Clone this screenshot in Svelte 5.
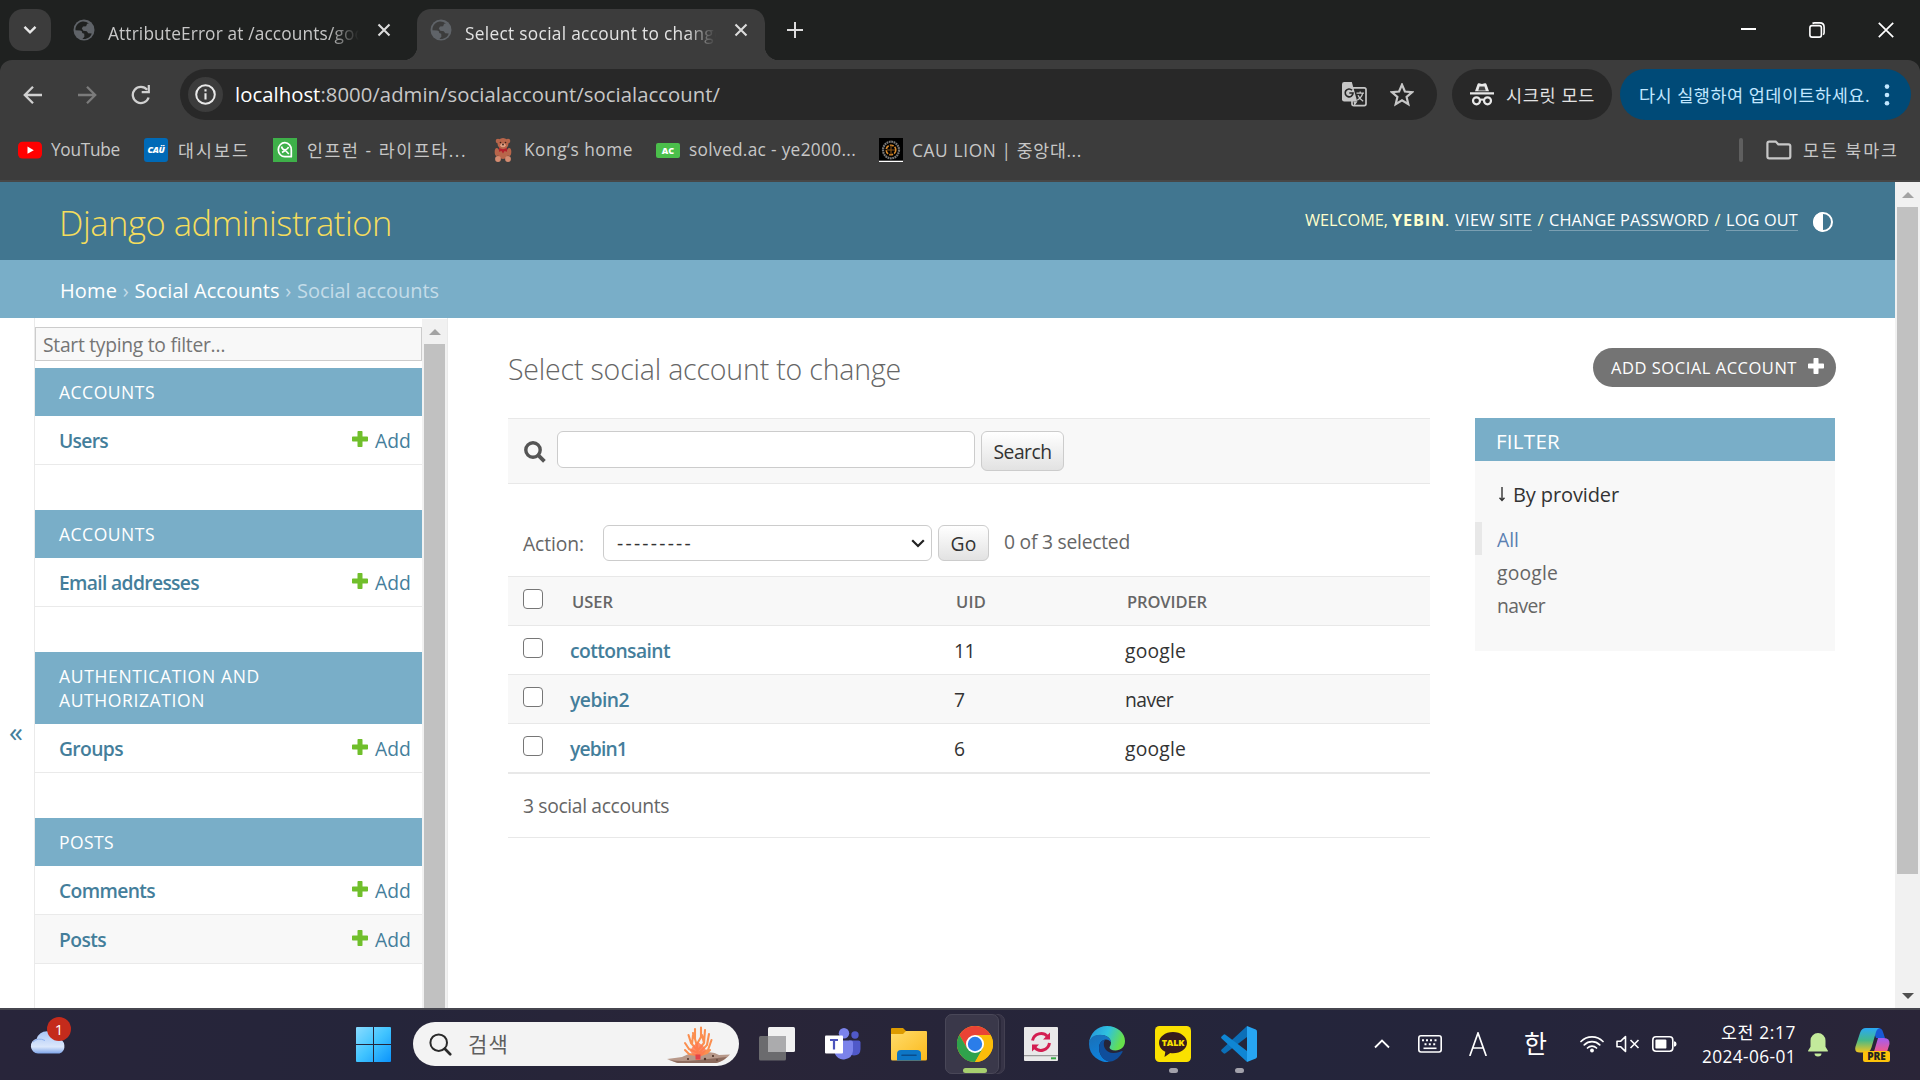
<script>
  // Spreads a label's letters so that it fills the given width in pixels.
  function fit(node, width) {
    const count = [...node.textContent].length;
    const natural = node.getBoundingClientRect().width;
    node.style.letterSpacing = `${(width - natural) / count}px`;
  }

  const modules = [
    { lines: [['ACCOUNTS', 96]], rows: [['Users', 49]] },
    { lines: [['ACCOUNTS', 96]], rows: [['Email addresses', 140]] },
    { lines: [['AUTHENTICATION AND', 201], ['AUTHORIZATION', 146]], rows: [['Groups', 64]] },
    { lines: [['POSTS', 55]], rows: [['Comments', 96], ['Posts', 47]] }
  ];

  const accounts = [
    { user: 'cottonsaint', w: 100, uid: '11', uw: 21, provider: 'google', pw: 61 },
    { user: 'yebin2', w: 59, uid: '7', uw: 11, provider: 'naver', pw: 48 },
    { user: 'yebin1', w: 57, uid: '6', uw: 11, provider: 'google', pw: 61 }
  ];
</script>

{#snippet globe()}
  <svg class="globe" width="22" height="22" viewBox="0 0 22 22">
    <circle cx="11" cy="11" r="10.5" fill="#5f6368" />
    <path d="M8.500 2.800c-4 1.200-6.300 4.700-6 8.400l4.500.3c1.500.2 2.300 1 2.200 2.500l2 .7.2 3-2 2.200c4.500.7 8.300-1.800 9.300-5.400l-3.500-.2-1.400-2.100-3.500-.5-1.500-2.200 1.200-1.900 3.100-.3 1-2.500 1.800-.3C13.700 2.800 11 2.100 8.500 2.800z" fill="currentColor" />
  </svg>
{/snippet}

{#snippet plus(color)}
  <svg class="plus" width="16" height="16" viewBox="0 0 16 16">
    <path d="M6.300 0h3.400q.8 0 .8.8v4.700h4.700q.8 0 .8.8v3.400q0 .8-.8.8h-4.700v4.700q0 .8-.8.8H6.300q-.8 0-.8-.8v-4.700H.8q-.8 0-.8-.8V6.300q0-.8.8-.8h4.700V.8q0-.8.8-.8z" fill={color} />
  </svg>
{/snippet}

{#snippet tabClose()}
  <svg width="14" height="14" viewBox="0 0 14 14"><path d="M1.500 1.500l11 11M12.500 1.500l-11 11" stroke="#dcdcdc" stroke-width="2.100" /></svg>
{/snippet}

<div class="screen">
  <div class="tabs">
    <div class="tab-menu">
      <svg width="14" height="10" viewBox="0 0 14 10"><path d="M1.500 1.800L7 7.300l5.500-5.500" fill="none" stroke="#e8e8e8" stroke-width="2.400" /></svg>
    </div>
    <div class="tab idle">
      {@render globe()}
      <div class="tab-title"><span class="t" use:fit={257}>AttributeError at /accounts/goo</span></div>
      {@render tabClose()}
    </div>
    <div class="tab active">
      {@render globe()}
      <div class="tab-title"><span class="t" use:fit={259}>Select social account to change</span></div>
      {@render tabClose()}
    </div>
    <svg class="new-tab" width="16" height="16" viewBox="0 0 16 16"><path d="M8 0v16M0 8h16" stroke="#dcdcdc" stroke-width="2" /></svg>
    <div class="window">
      <svg width="16" height="16" viewBox="0 0 16 16"><path d="M1 7h15" stroke="#fff" stroke-width="2" /></svg>
      <svg width="16" height="16" viewBox="0 0 16 16" fill="none" stroke="#fff" stroke-width="1.600"><rect x=".9" y="3.600" width="11.500" height="11.500" rx="2.200" /><path d="M3.500 1.500Q4.300.9 5.500.9h5.300q4.300 0 4.300 4.300v5.300q0 1.300-.9 2.200" /></svg>
      <svg width="16" height="16" viewBox="0 0 16 16"><path d="M.8.8l14.400 14.400M15.200.8L.8 15.200" stroke="#fff" stroke-width="1.700" /></svg>
    </div>
  </div>

  <div class="chrome">
    <div class="toolbar">
      <svg class="nav" width="20" height="20" viewBox="0 0 20 20" fill="none" stroke="#d0d0d0" stroke-width="2.300"><path d="M19 10H2.500M10 1.800L1.800 10l8.200 8.200" /></svg>
      <svg class="nav" width="20" height="20" viewBox="0 0 20 20" fill="none" stroke="#7b7b7b" stroke-width="2.300"><path d="M1 10h16.500M10 1.800l8.200 8.200-8.200 8.200" /></svg>
      <svg class="nav" width="20" height="20" viewBox="0 0 20 20"><path d="M17.600 12.500A8.100 8.100 0 1 1 16.200 4.800" fill="none" stroke="#d0d0d0" stroke-width="2.300" /><path d="M18.900 0v8.200h-8.200V6h6V0z" fill="#d0d0d0" /></svg>
      <div class="omnibox">
        <div class="info">
          <svg width="21" height="21" viewBox="0 0 21 21"><circle cx="10.500" cy="10.500" r="9.300" fill="none" stroke="#e8e8e8" stroke-width="2" /><path d="M10.500 9.200v6.300M10.500 5.300v2.300" stroke="#e8e8e8" stroke-width="2.100" /></svg>
        </div>
        <span class="t url" use:fit={485}><b>localhost</b>:8000/admin/socialaccount/socialaccount/</span>
        <svg class="translate" width="25" height="25" viewBox="0 0 25 25">
          <rect x="10" y="5.800" width="14" height="17.800" rx="1.800" fill="none" stroke="#c7c7c7" stroke-width="1.700" />
          <path d="M2.200 0h7.600l5.400 19.500H2.200Q0 19.500 0 17.300V2.200Q0 0 2.200 0z" fill="#c7c7c7" />
          <path d="M11.500 19.500h4L12.300 24z" fill="#c7c7c7" />
          <path d="M10 8.300A3.900 3.900 0 1 0 11 11H7.300" fill="none" stroke="#282828" stroke-width="1.700" />
          <path d="M14.500 11.200h7.500M18.200 9.500v1.700M20.700 11.200q-1 4.500-5.500 7M16 13.200q1.500 3.800 5.200 6" fill="none" stroke="#c7c7c7" stroke-width="1.300" />
        </svg>
        <svg class="star" width="24" height="24" viewBox="0 0 24 24"><path d="M12 1.600l2.900 6.900 7.300.6-5.600 4.800 1.700 7.200-6.300-3.900-6.300 3.900 1.700-7.200L1.800 9.100l7.300-.6z" fill="none" stroke="#c7c7c7" stroke-width="2.200" /></svg>
      </div>
      <div class="incognito">
        <svg width="24" height="23" viewBox="0 0 24 23"><path d="M0 9.200h24v2.200H0zM5 8.200L7.500 1.200Q7.900 0 9.100.3l2.900.8 2.900-.8q1.200-.3 1.600.9L19 8.200z" fill="#e8e8e8" /><path d="M9.500 3.500h5l1.200 4H8.300z" fill="#282828" opacity=".85" /><circle cx="6.500" cy="17.800" r="3.500" fill="none" stroke="#e8e8e8" stroke-width="2.200" /><circle cx="17.500" cy="17.800" r="3.500" fill="none" stroke="#e8e8e8" stroke-width="2.200" /><path d="M9.500 17.200q2.500-1.600 5 0" fill="none" stroke="#e8e8e8" stroke-width="2" /></svg>
        <span class="t" use:fit={89}>시크릿 모드</span>
      </div>
      <div class="update">
        <span class="t" use:fit={231}>다시 실행하여 업데이트하세요.</span>
        <svg width="6" height="22" viewBox="0 0 6 22" fill="#c2e7ff"><circle cx="3" cy="2.600" r="2.300" /><circle cx="3" cy="11" r="2.300" /><circle cx="3" cy="19.300" r="2.300" /></svg>
      </div>
    </div>
    <div class="bookmarks">
      <svg class="i1" width="24" height="24" viewBox="0 0 24 24"><rect x="0" y="3.800" width="24" height="16.800" rx="4.500" fill="#f00" /><path d="M9.500 8.600l6.300 3.600-6.300 3.600z" fill="#fff" /></svg>
      <span class="t b1" use:fit={69}>YouTube</span>
      <div class="cau"><i>CAÜ</i></div>
      <span class="t b2" use:fit={72}>대시보드</span>
      <svg class="i3" width="24" height="24" viewBox="0 0 24 24"><path d="M0 0h24v24H0z" fill="#3eb049" /><path d="M18.300 18.700H12A6.500 7 0 1 1 18.300 12z" fill="none" stroke="#fff" stroke-width="1.700" stroke-linejoin="round" /><path d="M8.500 8.500q.5 3 3.500 3.500 3-1 3.500-3M12 12l3.800 4M9 14.500l3-2" fill="none" stroke="#fff" stroke-width="1.600" /></svg>
      <span class="t b3" use:fit={160}>인프런 - 라이프타...</span>
      <svg class="i4" width="24" height="24" viewBox="0 0 24 24"><g fill="#b8654a"><circle cx="7" cy="3" r="2.300" /><circle cx="17" cy="3" r="2.300" /><circle cx="12" cy="5.500" r="5.500" /><ellipse cx="12" cy="15" rx="5.500" ry="6" /><ellipse cx="5.800" cy="14" rx="2.100" ry="4" /><ellipse cx="18.200" cy="14" rx="2.100" ry="4" /></g><circle cx="7" cy="21" r="2.900" fill="#d58b70" /><circle cx="17" cy="21" r="2.900" fill="#d58b70" /><ellipse cx="12" cy="7.300" rx="2.700" ry="2" fill="#e0a184" /><circle cx="9.500" cy="4.500" r=".8" fill="#3b1f1a" /><circle cx="14.500" cy="4.500" r=".8" fill="#3b1f1a" /><circle cx="12" cy="6.500" r=".9" fill="#3b1f1a" /><path d="M8 10l4 1.300 4-1.300v3.700l-2.500-.8L12 15.500l-1.500-2.600-2.500.8z" fill="#b3202c" /></svg>
      <span class="t b4" use:fit={109}>Kong‘s home</span>
      <div class="ac">AC</div>
      <span class="t b5" use:fit={167}>solved.ac - ye2000...</span>
      <svg class="i6" width="24" height="24" viewBox="0 0 24 24"><path d="M0 0h24v22.500H0z" fill="#000" /><path d="M0 22.800h24V24H0z" fill="#fff" /><ellipse cx="12" cy="12" rx="8" ry="8.300" fill="none" stroke="#777" stroke-width="2.200" stroke-dasharray="1.800 .6" /><circle cx="12" cy="12" r="4.800" fill="none" stroke="#d98a2b" stroke-width="1.600" stroke-dasharray="4 1.200" /><path d="M12 7v10M8 12h8" stroke="#8f5716" /></svg>
      <span class="t b6" use:fit={170}>CAU LION | 중앙대...</span>
      <div class="divider"></div>
      <svg class="folder" width="26" height="20" viewBox="0 0 26 20"><path d="M3.200 1.600h6.500l2.600 2.700h10.200q1.800 0 1.800 1.800v10.500q0 1.800-1.800 1.800H3.200q-1.800 0-1.800-1.800V3.400q0-1.800 1.800-1.800z" fill="none" stroke="#c7c7c7" stroke-width="2.200" /></svg>
      <span class="t" use:fit={96}>모든 북마크</span>
    </div>
  </div>

  <div class="viewport">
    <div class="page">
      <header>
        <span class="t brand" use:fit={333}>Django administration</span>
        <div class="tools">
          <span class="t" use:fit={87}>WELCOME,&nbsp;</span><b class="t" use:fit={53}>YEBIN</b><span class="t dot">.</span>
          <span class="t link" use:fit={77}>VIEW SITE</span><span class="slash">/</span>
          <span class="t link" use:fit={160}>CHANGE PASSWORD</span><span class="slash">/</span>
          <span class="t link" use:fit={72}>LOG OUT</span>
          <svg width="20" height="20" viewBox="0 0 20 20"><circle cx="10" cy="10" r="9" fill="none" stroke="#fff" stroke-width="2" /><path d="M10 0a10 10 0 0 0 0 20z" fill="#fff" /></svg>
        </div>
      </header>
      <div class="crumbs">
        <span class="t on" use:fit={57}>Home</span><span class="sep">›</span>
        <span class="t on" use:fit={145}>Social Accounts</span><span class="sep">›</span>
        <span class="t" use:fit={142}>Social accounts</span>
      </div>

      <div class="body">
        <div class="toggle">«</div>
        <nav>
          <div class="nav-list">
            <input class="filter-input" placeholder="Start typing to filter…" />
            {#each modules as m}
              <section>
                <h2>{#each m.lines as [text, w]}<span class="t" use:fit={w}>{text}</span>{/each}</h2>
                {#each m.rows as [name, w]}
                  <div class="model">
                    <b class="t" use:fit={w}>{name}</b>
                    {@render plus('#70bf2b')}
                    <span class="t add" use:fit={36}>Add</span>
                  </div>
                {/each}
              </section>
            {/each}
          </div>
          <div class="scroll side">
            <svg class="arrow" width="12" height="6" viewBox="0 0 12 6"><path d="M0 6L6 0l6 6z" fill="#a3a3a3" /></svg>
            <div class="thumb"></div>
          </div>
        </nav>

        <main>
          <div class="title">
            <h1 class="t" use:fit={393}>Select social account to change</h1>
            <div class="add-btn"><span class="t" use:fit={186}>ADD SOCIAL ACCOUNT</span>{@render plus('#fff')}</div>
          </div>
          <div class="cols">
            <div class="list">
              <div class="search">
                <svg width="22" height="22" viewBox="0 0 22 22" fill="none" stroke="#555"><circle cx="9" cy="9" r="7.200" stroke-width="3.400" /><path d="M14.200 14.200l6.200 6.200" stroke-width="3.800" /></svg>
                <input class="query" />
                <button class="search-btn"><span class="t" use:fit={58}>Search</span></button>
              </div>
              <div class="actions">
                <div class="label"><span class="t" use:fit={61}>Action:</span></div>
                <div class="select"><span class="t" use:fit={76}>---------</span><svg width="14" height="9" viewBox="0 0 14 9"><path d="M1.200 1.200L7 7l5.800-5.800" fill="none" stroke="#222" stroke-width="2.200" /></svg></div>
                <button class="go"><span class="t" use:fit={26}>Go</span></button>
                <span class="t count" use:fit={126}>0 of 3 selected</span>
              </div>
              <div class="row head">
                <input type="checkbox" />
                <span class="t" use:fit={41}>USER</span><span class="t" use:fit={30}>UID</span><span class="t" use:fit={80}>PROVIDER</span>
              </div>
              {#each accounts as a}
                <div class="row">
                  <input type="checkbox" />
                  <b class="t" use:fit={a.w}>{a.user}</b><span class="t" use:fit={a.uw}>{a.uid}</span><span class="t" use:fit={a.pw}>{a.provider}</span>
                </div>
              {/each}
              <div class="paginator"><span class="t" use:fit={146}>3 social accounts</span></div>
            </div>

            <aside>
              <h2><span class="t" use:fit={64}>FILTER</span></h2>
              <h3>
                <svg width="8" height="15" viewBox="0 0 8 15"><path d="M4 0v13M1.500 10.800l2.500 2.700 2.500-2.700" fill="none" stroke="#333" stroke-width="1.400" /></svg>
                <span class="t" use:fit={106}>By provider</span>
              </h3>
              <div class="opt chosen"><span class="t" use:fit={22}>All</span></div>
              <div class="opt"><span class="t" use:fit={61}>google</span></div>
              <div class="opt"><span class="t" use:fit={48}>naver</span></div>
            </aside>
          </div>
        </main>
      </div>
    </div>
    <div class="scroll outer">
      <svg class="arrow" width="12" height="6" viewBox="0 0 12 6"><path d="M0 6L6 0l6 6z" fill="#a3a3a3" /></svg>
      <div class="thumb"></div>
      <svg class="down" width="12" height="6" viewBox="0 0 12 6"><path d="M0 0l6 6 6-6z" fill="#505050" /></svg>
    </div>
  </div>

  <footer>
    <div class="weather">
      <svg width="38" height="26" viewBox="0 0 38 26">
        <defs><linearGradient id="cl" x1="0" y1="0" x2="0" y2="1"><stop offset="0" stop-color="#a9c6f7" /><stop offset=".7" stop-color="#dbe7fb" /><stop offset="1" stop-color="#7fa6ea" /></linearGradient></defs>
        <path d="M8 24.500a7.500 7.500 0 0 1-1.300-14.800A11 11 0 0 1 27.500 9.500 7.800 7.800 0 0 1 29.500 24.500z" fill="url(#cl)" /><path d="M3 13q5-5 12-1.500" fill="none" stroke="#8fb1ee" />
      </svg>
      <span class="badge">1</span>
    </div>
    <svg class="start" width="36" height="36" viewBox="0 0 36 36">
      <defs><linearGradient id="win" x1="0" y1="0" x2="1" y2="1"><stop offset="0" stop-color="#8adcff" /><stop offset=".5" stop-color="#41c4ff" /><stop offset="1" stop-color="#0b93fb" /></linearGradient></defs>
      <path d="M1 0h16v17H0V1q0-1 1-1zM18 0h16q1 0 1 1v16H18zM0 18h17v17H1q-1 0-1-1zM18 18h17v16q0 1-1 1H18z" fill="url(#win)" />
    </svg>
    <div class="find">
      <svg width="23" height="23" viewBox="0 0 23 23" fill="none" stroke="#2a2a2a"><circle cx="9.700" cy="9.700" r="8.300" stroke-width="2" /><path d="M15.800 15.800l5.400 5.400" stroke-width="2.700" stroke-linecap="round" /></svg>
      <span class="t" use:fit={41}>검색</span>
      <svg class="coral" width="64" height="40" viewBox="0 0 64 40">
        <path d="M0 34q8-1 15-2 8-5 18-2.500Q44 25 52 30l11-.5q-5 6-13 8.500H10z" fill="#b8998a" />
        <path d="M2 35q12 2 30 0t28-3q-4 4-11 6H11z" fill="#6f4c40" opacity=".6" />
        <g fill="#4d3228"><circle cx="21" cy="34" r="1" /><circle cx="38" cy="34" r="1.200" /><circle cx="46" cy="31" r="1.100" /><circle cx="50" cy="35" r=".8" /></g>
        <g fill="none" stroke="#fb8f50" stroke-width="2.100" stroke-linecap="round" stroke-linejoin="round"><path d="M31 33l-1-12-2-7V4M30 19l4-7V2.500M31 26l-7-8-2.500-8M31 28l-9-4-4-6M30 30l-8-1-4-4M32 24l5-6 1-13M33 27l7-7 2-11M33 29l8-4 3.500-10M34 30l6-2 3-3M25 19l1-9M28 14l-2-6M37 18l-2-8" /></g>
        <path d="M23 26q3-6 8-9 5 3 8 8-3 6-6 6.500V35h-4v-3.500q-4-2-6-5.500z" fill="#ff7a50" opacity=".85" />
        <path d="M28.500 29.500h5v5h-5z" fill="#e3434a" />
      </svg>
    </div>
    <svg class="taskview" width="36" height="34" viewBox="0 0 36 34"><rect x="9" y="0" width="27" height="25" rx="1.500" fill="#f1f1f1" /><rect x="0" y="9" width="27" height="24.500" rx="1.500" fill="#6b6b6e" /><path d="M9 9h18v16H9z" fill="#ababad" /></svg>
    <svg class="teams" width="36" height="34" viewBox="0 0 36 34"><circle cx="30" cy="7" r="3.700" fill="#5059c9" /><circle cx="19" cy="5.200" r="5.200" fill="#7b83eb" /><path d="M24 12.500h9.500q2 0 2 2V21q0 6.500-6.500 6.500-3 0-5-2z" fill="#5059c9" /><path d="M10 12.500h16q2 0 2 2V23a9.500 9.500 0 0 1-18 3z" fill="#7b83eb" /><rect x="0" y="7.500" width="18" height="18" rx="1" fill="#fff" /><path d="M5 12h8M9 12v9.500" stroke="#4b53bc" stroke-width="2.200" /></svg>
    <svg class="files" width="36" height="34" viewBox="0 0 36 34"><defs><linearGradient id="fo" x1="0" y1="0" x2="1" y2="1"><stop offset="0" stop-color="#ffdc6b" /><stop offset="1" stop-color="#fbb91b" /></linearGradient></defs><path d="M1 1h11l3 3v8H0V2q0-1 1-1z" fill="#dd9b00" /><path d="M0 7h12l3-3h20q1 0 1 1v27q0 1.500-1.500 1.500h-33Q0 33.500 0 32z" fill="url(#fo)" /><path d="M6 33.500V27q0-4 4-4h16q4 0 4 4v6.500z" fill="#0d76c6" /><path d="M11 28.200h14" stroke="#0a4d8c" stroke-width="1.600" stroke-linecap="round" /></svg>
    <div class="stack">
      <div class="slot">
        <svg width="36" height="36" viewBox="0 0 36 36"><circle cx="18" cy="18" r="18" fill="#fbbc0a" /><path d="M2.400 9A18 18 0 0 1 33.600 9H18l-7.800 13.500z" fill="#ea4335" /><path d="M2.400 9A18 18 0 0 0 18 36l7.800-13.500H10.200z" fill="#2fa24c" /><path d="M18 9h15.600A18 18 0 0 1 18 36l7.800-13.500z" fill="#fbbc0a" /><circle cx="18" cy="18" r="9" fill="#fff" /><circle cx="18" cy="18" r="7.200" fill="#2b7de9" /></svg>
        <span class="mark wide"></span>
      </div>
    </div>
    <svg class="sync" width="34" height="34" viewBox="0 0 34 34"><rect width="34" height="34" rx="1" fill="#e9e9e9" /><path d="M0 28h34v1.300H0z" fill="#9a9a9a" /><path d="M27 30.300h5v2h-5z" fill="#38a845" /><g fill="none" stroke="#d31f51" stroke-width="3"><path d="M8.500 13.500a8.700 8.700 0 0 1 15-4" /><path d="M25.500 16a8.700 8.700 0 0 1-15 4.500" /></g><path d="M26 5.500v7h-7zM8 24.500v-7h7z" fill="#d31f51" /></svg>
    <svg class="edge" width="36" height="36" viewBox="0 0 36 36"><defs><linearGradient id="e1" x1="0" y1="0" x2="1" y2=".3"><stop offset="0" stop-color="#2390dd" /><stop offset=".55" stop-color="#2fc2df" /><stop offset="1" stop-color="#66e04c" /></linearGradient><linearGradient id="e2" x1="0" y1="0" x2=".4" y2="1"><stop offset="0" stop-color="#1b6fb5" /><stop offset="1" stop-color="#0d82dd" /></linearGradient></defs><path d="M0 17C1 7 8.500 0 18 0c10.500 0 18 7 18 15 0 6-4.500 9.500-9.500 9.500-4 0-6-1.500-6-3 0-1.200 1.500-2 1.500-5C22 12 17 9 12 9 6 9 1.500 12.500 0 17z" fill="url(#e1)" /><path d="M0 18C0 12 5 8.800 11 8.800c6 0 11 3.200 11 7.700-1-2-3-3-5-3-4 0-7 4-7 8.500C10 29 15 35 21.500 35.600A18 18 0 0 1 0 18z" fill="url(#e2)" /><path d="M10 22c0-4.500 2.500-8 6-8.300-3 4.500-.5 13.300 8.500 13.300 4 0 7-1.500 8.500-2 .6 0 .8.500.5 1-2.500 5-7 9-12 9.600C15 35.500 10 29 10 22z" fill="#0f4e9c" /></svg>
    <div class="kakao">
      <svg width="36" height="36" viewBox="0 0 36 36"><rect width="36" height="36" rx="4.500" fill="#fae100" /><path d="M18 6C10.300 6 4 10.800 4 16.700c0 4 2.700 7.300 6.300 9.100L9.500 31l5.700-4q1.400.2 2.800.2c7.700 0 14-4.600 14-10.500S25.700 6 18 6z" fill="#371c1d" /></svg>
      <span>TALK</span><i class="mark"></i>
    </div>
    <div class="code">
      <svg width="36" height="36" viewBox="0 0 36 36"><path d="M26 0v11L4.500 27.300q-1 .7-2 0L.6 25.500q-1-1 0-2L25 1z" fill="#0b6fb8" /><path d="M26 36V25L4.500 8.700q-1-.7-2 0L.6 10.500q-1 1 0 2L25 35z" fill="#0f86d4" /><path d="M26 0l8.800 3.600q1.200.6 1.200 2v24.800q0 1.400-1.200 2L26 36z" fill="#27a5f2" /></svg>
      <i class="mark"></i>
    </div>

    <svg class="up" width="16" height="10" viewBox="0 0 16 10"><path d="M1 8.500l7-7 7 7" fill="none" stroke="#fff" stroke-width="1.800" /></svg>
    <svg class="kbd" width="24" height="18" viewBox="0 0 24 18"><rect x=".8" y=".8" width="22.400" height="16.200" rx="2.200" fill="none" stroke="#fff" stroke-width="1.600" /><path d="M4 5.300h2M8 5.300h2M12 5.300h2M16.500 5.300h2M6.500 9.300h2M10.800 9.300h2M15.200 9.300h2" stroke="#fff" stroke-width="1.900" /><path d="M5.500 13.300h13" stroke="#fff" stroke-width="1.600" /></svg>
    <svg class="latin" width="18" height="24" viewBox="0 0 18 24"><path d="M.8 24L9 1l8.200 23M3.600 16h10.800" fill="none" stroke="#fff" stroke-width="1.700" /></svg>
    <span class="hangul">한</span>
    <svg class="wifi" width="24" height="18" viewBox="0 0 24 18" fill="none" stroke="#fff" stroke-width="1.700" stroke-linecap="round"><path d="M1 6.500a15.500 15.500 0 0 1 22 0M4.300 9.900a10.900 10.900 0 0 1 15.400 0M7.500 13a6.400 6.400 0 0 1 9 0" /><circle cx="12" cy="15.500" r="1.900" fill="#fff" stroke="none" /></svg>
    <svg class="mute" width="24" height="18" viewBox="0 0 24 18" fill="none" stroke="#fff" stroke-width="1.600"><path d="M1 6.300v5.400h3.500L9.500 16.500v-15L4.500 6.300z" stroke-linejoin="round" /><path d="M14.500 5l8 8M22.500 5l-8 8" /></svg>
    <svg class="battery" width="25" height="16" viewBox="0 0 25 16"><rect x=".8" y=".8" width="20" height="14.400" rx="3.200" fill="none" stroke="#fff" stroke-width="1.600" /><rect x="3.400" y="3.400" width="11" height="9.200" rx="1.200" fill="#fff" /><path d="M22 5.200q2.600.3 2.600 2.800T22 10.800z" fill="#fff" /></svg>
    <div class="clock"><span class="t" use:fit={75}>오전 2:17</span><span class="t" use:fit={94}>2024-06-01</span></div>
    <svg class="bell" width="20" height="24" viewBox="0 0 20 24"><path d="M10 0a7.500 7.500 0 0 1 7.500 7.500v6.300l2.300 3.800q.4 1-.6 1H.8q-1 0-.6-1l2.300-3.800V7.500A7.500 7.500 0 0 1 10 0zM6.500 20.500h7a3.500 3 0 0 1-7 0z" fill="#c3ea9b" /></svg>
    <div class="copilot">
      <svg width="36" height="36" viewBox="0 0 36 36"><defs><linearGradient id="c1" x1="0" y1="0" x2="0" y2="1"><stop offset="0" stop-color="#2aa8f5" /><stop offset=".5" stop-color="#45b98a" /><stop offset="1" stop-color="#f4c51c" /></linearGradient><linearGradient id="c2" x1="0" y1="0" x2="0" y2="1"><stop offset="0" stop-color="#a05df5" /><stop offset=".6" stop-color="#f0598d" /><stop offset="1" stop-color="#fa9060" /></linearGradient></defs><path d="M17 0h6q4 0 5 4l2 6h-9z" fill="#1859d6" /><path d="M11 0h14q-3 .5-4 4l-4.500 15.500q-1.500 5-6 5H5q-6 0-4.500-6L5 5q1.500-5 6-5z" fill="url(#c1)" /><path d="M23 10h6q6 0 5.500 6L31 27q-1 5-6 5H15q2-1 3-5z" fill="url(#c2)" /></svg>
      <span>PRE</span>
    </div>
  </footer>
</div>

<style>
  :global(body) { margin: 0; overflow: hidden; }
  .screen { width: 1920px; height: 1080px; display: flex; flex-direction: column; background: #fff; color: #333; font-family: "Open Sans", "Noto Sans CJK KR", sans-serif; font-size: 19.300px; overflow: hidden; }
  .screen :global(*) { box-sizing: border-box; }
  svg { display: block; flex: none; }
  .t { display: block; width: max-content; flex: none; white-space: nowrap; }
  h1, h2, h3 { margin: 0; font-weight: 400; }
  b { font-weight: 600; }
  button, input { font: inherit; color: inherit; margin: 0; padding: 0; }

  .tabs { height: 60px; flex: none; background: #1f2120; display: flex; padding-left: 9px; font-size: 17.300px; }
  .tab-menu { width: 42px; height: 42px; margin-top: 9px; border-radius: 14px; background: #3c3c3c; display: grid; place-items: center; }
  .tab { margin-top: 9px; height: 51px; display: flex; align-items: flex-start; color: #c7c7c7; }
  .tab.idle { width: 354px; margin-left: 12px; padding: 10px 0 0 10px; }
  .tab.active { position: relative; width: 348px; padding: 10px 0 0 13px; background: #3c3c3c; border-radius: 14px 14px 0 0; color: #e3e3e3; }
  .tab.active::before, .tab.active::after { content: ""; position: absolute; bottom: 0; width: 14px; height: 14px; }
  .tab.active::before { left: -14px; background: radial-gradient(circle at 0 0, transparent 14px, #3c3c3c 14.500px); }
  .tab.active::after { right: -14px; background: radial-gradient(circle at 100% 0, transparent 14px, #3c3c3c 14.500px); }
  .idle .globe { color: #1f2120; }
  .active .globe { color: #3c3c3c; }
  .tab-title { width: 251px; margin: 1px 18px 0 13px; line-height: 27px; overflow: hidden; mask-image: linear-gradient(90deg, #000 88%, transparent 100%); }
  .tab > :global(svg:last-child) { margin-top: 4px; }
  .new-tab { margin: 22px 0 0 22px; }
  .window { margin-left: auto; padding: 22px 26px 0 0; display: flex; gap: 53px; }

  .chrome { position: relative; height: 122px; flex: none; padding-top: 9px; background: #3c3c3c; border-bottom: 2px solid #474747; color: #c7c7c7; }
  .chrome::before { content: ""; position: absolute; inset: 0 0 auto; height: 12px; background: #1f2120; clip-path: path("M0 0H12A12 12 0 0 0 0 12ZM1908 0H1920V12A12 12 0 0 0 1908 0Z"); }
  .toolbar { display: flex; align-items: center; height: 51px; padding-left: 23px; }
  .nav { margin-right: 34px; }
  .nav:nth-child(3) { margin-right: 29px; }
  .omnibox { width: 1257px; height: 51px; border-radius: 26px; background: #282828; display: flex; align-items: center; padding-left: 8px; font-size: 20.300px; }
  .info { width: 35px; height: 35px; border-radius: 50%; background: #3c3c3c; display: grid; place-items: center; margin-right: 12px; }
  .url { margin-bottom: 2px; }
  .url b { color: #fff; font-weight: 400; }
  .translate { margin: 0 23px 0 auto; }
  .star { margin-right: 23px; }
  .incognito { width: 160px; height: 51px; border-radius: 26px; margin: 0 8px 0 15px; background: #282828; display: flex; align-items: center; padding-left: 18px; gap: 12px; color: #e3e3e3; font-size: 17.500px; }
  .incognito .t, .update .t { margin-bottom: 1px; }
  .update { width: 291px; height: 51px; border-radius: 26px; background: #004a77; color: #c2e7ff; display: flex; align-items: center; padding-left: 19px; font-size: 17.500px; gap: 14px; }
  .bookmarks { display: flex; align-items: center; height: 60px; padding: 0 21px 0 18px; font-size: 17.300px; }
  .bookmarks .t { padding-bottom: 2px; }
  .b1 { margin: 0 24px 0 9px; }
  .cau { width: 24px; height: 24px; border-radius: 3px; background: #006ab7; color: #fff; font: 800 9px/24px "Open Sans", sans-serif; text-align: center; letter-spacing: -.4px; }
  .b2 { margin: 0 23px 0 10px; }
  .b3 { margin: 0 24px 0 10px; }
  .b4 { margin: 0 23px 0 9px; }
  .ac { width: 24px; height: 15px; border-radius: 2px; background: #4bbf4b; color: #fff; font: 800 9px/15px "Open Sans", sans-serif; text-align: center; }
  .b5 { margin: 0 23px 0 9px; }
  .b6 { margin-left: 9px; }
  .divider { width: 4px; height: 24px; border-radius: 2px; background: #5f5f5f; margin: 0 23px 0 auto; }
  .folder { margin-right: 11px; }

  .viewport { height: 826px; flex: none; display: flex; }
  .page { width: 1895px; display: flex; flex-direction: column; }
  header { height: 78px; flex: none; background: #417690; display: flex; justify-content: space-between; padding: 0 62px 0 59px; }
  .brand { font-size: 34.500px; font-weight: 300; line-height: 82px; color: #f5dd5d; }
  .tools { display: flex; align-items: flex-start; padding-top: 28px; color: #ffc; font-size: 16.300px; line-height: 20px; }
  .tools b { font-weight: 700; }
  .dot { margin-right: 5px; width: 5px; }
  .link { color: #fff; border-bottom: 1px solid #7a9fb2; height: 21px; }
  .slash { width: 17px; text-align: center; }
  .tools svg { margin: 2px 0 0 15px; }
  .crumbs { height: 58px; flex: none; background: #79aec8; color: #c4dce8; display: flex; padding-left: 60px; line-height: 62px; font-size: 20px; }
  .crumbs .on { color: #fff; font-weight: 500; }
  .sep { width: 17.500px; text-align: center; }

  .body { height: 690px; display: flex; overflow: hidden; }
  .toggle { width: 34px; line-height: 24px; padding: 401px 0 0 9px; color: #447e9b; font-size: 28px; }
  nav { width: 414px; border: solid #eaeaea; border-width: 0 1px; display: flex; }
  .nav-list { width: 387px; padding-top: 9px; }
  .filter-input { display: block; width: 387px; height: 34px; border: 1px solid #ccc; background: #f8f8f8; padding: 0 0 0 7px; outline: 0; letter-spacing: -.28px; }
  .filter-input::placeholder { color: #757575; opacity: 1; }
  section { margin: 7px 0 45px; }
  section + section { margin-top: 0; }
  section h2 { background: #79aec8; color: #fff; font-size: 17.500px; line-height: 24px; padding: 12px 24px; }
  .model { height: 49px; border-bottom: 1px solid #eaeaea; display: flex; align-items: center; padding: 0 11px 0 24px; color: #447e9b; }
  .model:nth-child(odd) { background: #f8f8f8; }
  .model :global(.plus) { margin: 0 7px 2px auto; }
  .scroll { width: 25px; background: #f1f1f1; display: flex; flex-direction: column; align-items: center; }
  .scroll .arrow { margin-top: 10px; }
  .side { margin-top: 1px; }
  .thumb { width: 21px; background: #c1c1c1; }
  .side .thumb { margin-top: 9px; flex: 1; }
  .outer .thumb { margin-top: 9px; height: 667px; }
  .down { margin-top: 119px; }

  main { width: 1387px; margin-left: 60px; }
  .title { height: 100px; display: flex; justify-content: space-between; padding-top: 30px; }
  h1 { font-size: 28.500px; font-weight: 300; line-height: 43px; color: #666; }
  .add-btn { width: 243px; height: 39px; margin: 0 59px 0 0; border-radius: 20px; background: #747474; color: #fff; display: flex; align-items: center; padding-left: 18px; font-size: 16.500px; gap: 11px; flex: none; }
  .add-btn :global(.plus) { margin-bottom: 3px; }
  .cols { display: flex; align-items: flex-start; }
  .list { width: 922px; flex: none; margin-right: 45px; }
  .search { height: 66px; border: solid #e8e8e8; border-width: 1px 0; background: #f8f8f8; display: flex; align-items: flex-start; padding: 12px 0 0 16px; }
  .search svg { margin: 10px 11px 0 0; }
  .query { width: 418px; height: 37px; border: 1px solid #ccc; border-radius: 6px; background: #fff; outline: 0; }
  button { border: 1px solid #ccc; border-radius: 6px; background: linear-gradient(#fff, #e2e2e2); color: #333; display: grid; place-items: center; margin-left: 6px; }
  .search-btn { width: 83px; height: 40px; }
  .actions { height: 92px; padding: 41px 0 0 15px; display: flex; align-items: flex-start; line-height: 36px; color: #666; }
  .label { width: 80px; margin-top: 1px; }
  .select { width: 329px; height: 36px; border: 1px solid #ccc; border-radius: 6px; display: flex; align-items: center; justify-content: space-between; padding: 0 6px 0 13px; color: #333; }
  .go { width: 51px; height: 36px; padding-top: 1px; line-height: 24px; }
  .count { margin: -1px 0 0 15px; }
  .row { height: 49px; border-bottom: 1px solid #e8e8e8; display: grid; grid-template-columns: 47px 384px 171px 1fr; align-items: center; padding-left: 15px; }
  .row .t { padding-top: 1px; }
  .row input { appearance: none; width: 20px; height: 20px; border: 1.500px solid #767676; border-radius: 4px; background: #fff; margin-bottom: 4px; }
  .row b { color: #447e9b; }
  .head { height: 50px; border-top: 1px solid #e8e8e8; background: #f8f8f8; color: #666; font-size: 16.500px; font-weight: 600; }
  .head .t { margin-left: 2px; padding: 0; }
  .head input { margin-bottom: 5px; }
  .row:nth-of-type(5) { background: #f8f8f8; }
  .paginator { height: 65px; border: solid #e8e8e8; border-width: 1px 0; color: #666; line-height: 64px; padding-left: 15px; }
  aside { width: 360px; flex: none; height: 233px; background: #f8f8f8; }
  aside h2 { height: 43px; line-height: 46px; background: #79aec8; color: #fff; font-size: 20.500px; padding-left: 21px; }
  aside h3 { display: flex; align-items: center; gap: 7px; height: 61px; padding: 5px 0 0 23px; font-size: 20px; }
  .opt { height: 33px; line-height: 36px; padding-left: 22px; color: #666; }
  .chosen { border-left: 7px solid #e8e8e8; padding-left: 15px; color: #5b80b2; }

  footer { height: 72px; flex: none; border-top: 2px solid #46464f; background: linear-gradient(90deg, #28253a, #25253a 20%, #292538 38%, #24253b 66%, #25253b 80%, #2a2538); display: flex; align-items: flex-start; color: #fff; }
  .weather { position: relative; margin: 19px 0 0 30px; width: 38px; }
  .badge { position: absolute; left: 17px; top: -12px; width: 24px; height: 24px; border-radius: 50%; background: #c42b1c; font-size: 15px; line-height: 24px; text-align: center; }
  .start { margin: 17px 0 0 288px; }
  .find { width: 326px; height: 44px; margin: 12px 0 0 21px; border-radius: 22px; background: #f3f3f3; color: #5f5f5f; display: flex; align-items: center; padding-left: 16px; font-size: 21px; gap: 16px; overflow: hidden; }
  .find .t { padding-bottom: 2px; }
  .coral { margin: 2px 8px 0 auto; }
  .taskview { margin: 17px 0 0 20px; }
  .teams { margin: 18px 0 0 30px; }
  .files { margin: 17px 0 0 30px; }
  .stack { width: 60px; height: 60px; margin: 4px 0 0 18px; border-radius: 7px; background: #363346; border: 1px solid #434051; }
  .slot { position: relative; width: 54px; height: 60px; margin: -1px; border-radius: 7px; background: #3a384a; border: 1px solid #494758; padding: 11px 0 0 11px; box-shadow: 2px 0 0 #2a283a; }
  .mark { position: absolute; left: 14px; top: 41px; width: 9px; height: 5px; border-radius: 3px; background: #a2a1ab; }
  .mark.wide { left: 17px; top: 53px; width: 24px; background: #a7cf6f; }
  .sync { margin: 17px 0 0 19px; }
  .edge { margin: 16px 0 0 31px; }
  .kakao, .code { position: relative; width: 36px; margin: 16px 0 0 30px; }
  .kakao .mark, .code .mark { top: 42px; }
  .kakao span { position: absolute; left: 0; top: 9px; width: 36px; text-align: center; font: 800 9px/16px "Open Sans", sans-serif; color: #fae100; letter-spacing: -.2px; }
  .up { margin: 29px 0 0 117px; }
  .kbd { margin: 25px 0 0 28px; }
  .latin { margin: 22px 0 0 27px; }
  .hangul { width: 24px; margin: 19px 0 0 37px; font: 400 25px/27px "Noto Sans CJK KR", sans-serif; }
  .wifi { margin: 25px 0 0 32px; }
  .mute { margin: 25px 0 0 12px; }
  .battery { margin: 26px 0 0 12px; }
  .clock { width: 119px; padding-top: 11px; display: flex; flex-direction: column; align-items: flex-end; font-size: 17.300px; line-height: 24px; }
  .bell { margin: 23px 0 0 12px; }
  .copilot { position: relative; margin: 18px 0 0 27px; }
  .copilot span { position: absolute; left: 8px; top: 23px; width: 27px; height: 11px; border-radius: 2px; background: #fcc30b; color: #222; font: 800 10px/11px "Open Sans", sans-serif; text-align: center; }
</style>
